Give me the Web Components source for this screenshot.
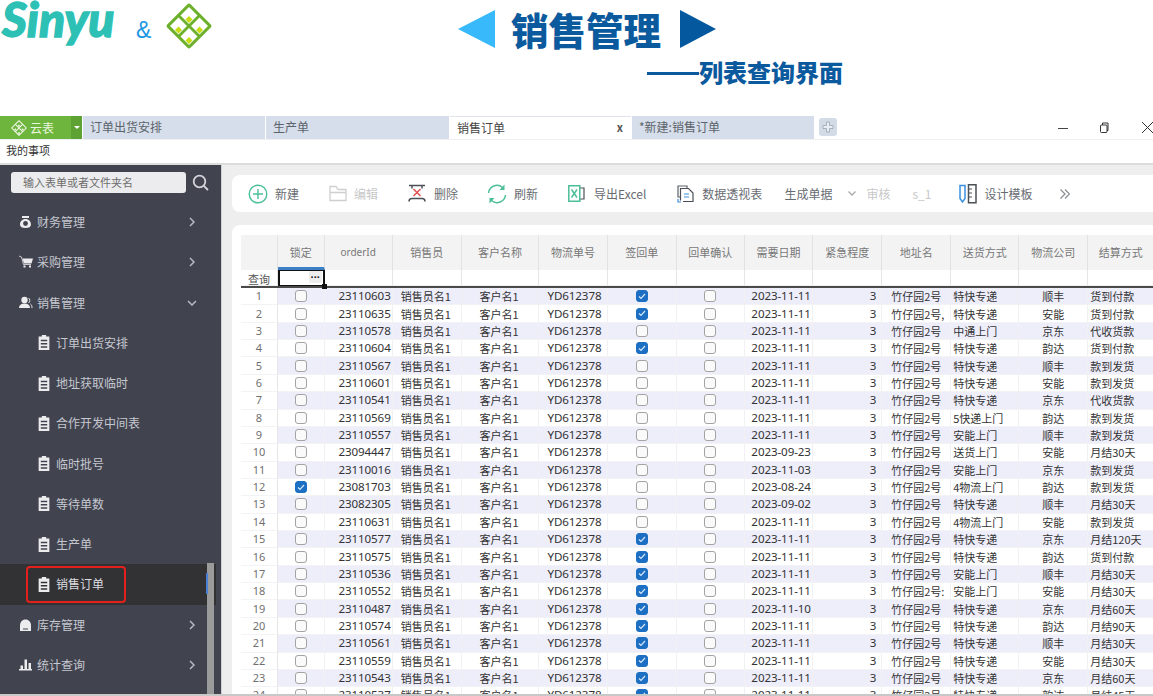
<!DOCTYPE html>
<html lang="zh">
<head>
<meta charset="utf-8">
<title>销售管理</title>
<style>
  html, body { margin: 0; height: 696px; overflow: hidden; background: #fff; }
  body { font-family: "Noto Sans CJK SC", "Noto Sans", sans-serif; }
</style>
</head>
<body>
<slide-header></slide-header>
<app-tabs></app-tabs>
<div style="height:25px;padding-left:6px;font-size:11px;line-height:21px;color:#333;box-sizing:border-box;border-bottom:2px solid #dcdcdc">我的事项</div>
<app-shell>
  <side-menu slot="side"></side-menu>
  <tool-bar slot="main"></tool-bar>
  <data-grid slot="main"></data-grid>
</app-shell>

<script>
const CJK = `"Noto Sans CJK SC", "Noto Sans", sans-serif`;

const diamondMark = (body, mark, dot) => `
  <svg viewBox="0 0 46 46" width="100%" height="100%" aria-hidden="true">
    <rect x="6.500" y="6.500" width="33" height="33" rx="2.500" transform="rotate(45 23 23)" fill="${body}"/>
    ${[[23, 12.5], [12.5, 23], [33.5, 23], [23, 33.5]].map(([x, y]) => `
      <path d="M${x} ${y - 8.5}l8.500 8.500-8.500 8.500-8.500-8.500z" fill="${mark}"/>
      <path d="M${x} ${y + .5}l3.500 3.500-3.500 3.500-3.500-3.500z" fill="${dot}"/>`).join("")}
  </svg>`;

class SlideHeader extends HTMLElement {
  constructor() {
    super();
    this.attachShadow({ mode: "open" }).innerHTML = `
      <style>
        :host { display: block; height: 116px; box-sizing: border-box; overflow: hidden; background: #fff; }
        .top { display: flex; align-items: flex-start; height: 56px; }
        .brand {
          width: 136px; padding-left: 2px; box-sizing: border-box;
          font: italic 900 48px/37px Lato, sans-serif; color: #2dc0b5; white-space: nowrap;
          -webkit-text-stroke: 1.300px #2dc0b5;
        }
        .amp { width: 30px; margin-top: 15px; font: 23px/30px "Liberation Sans", sans-serif; color: #1f97e2; }
        .mark { width: 46px; height: 46px; margin-top: 3px; }
        .title {
          display: flex; align-items: center; gap: 16px; margin: 10px 0 0 246px; height: 38px;
          font: 900 37.5px/38px ${CJK}; color: #0b5a9e; white-space: nowrap;
        }
        .tri { width: 0; height: 0; border-block: 19px solid transparent; }
        .tri.l { border-right: 37px solid #38b9fb; }
        .tri.r { border-left: 36px solid #04589e; margin-left: 3px; }
        .sub { padding: 0 0 0 647px; margin-top: 2px; font: 900 24px/28px ${CJK}; color: #0b5a9e; white-space: nowrap; }
        .sub span { display: inline-block; width: 52px; height: 3px; margin-bottom: 7px; background: #0b5a9e; }
      </style>
      <div class="top">
        <div class="brand">Sinyu</div>
        <div class="amp">&amp;</div>
        <div class="mark">${diamondMark("#6cb02c", "#fff", "#c8dc12")}</div>
        <div class="title"><span class="tri l"></span><span>销售管理</span><span class="tri r"></span></div>
      </div>
      <div class="sub"><span></span>列表查询界面</div>`;
  }
}

class AppTabs extends HTMLElement {
  constructor() {
    super();
    const tabs = [
      ["订单出货安排", 182, false],
      ["生产单", 183, false],
      ["销售订单", 181, true],
      ["*新建:销售订单", 182, false],
    ];
    this.attachShadow({ mode: "open" }).innerHTML = `
      <style>
        :host {
          display: flex; height: 24px; box-sizing: border-box; border-bottom: 1px solid #eef0f3;
          background: #fff; font: 12px/22px ${CJK}; color: #5d636b;
        }
        .home { display: flex; width: 82px; height: 23px; margin-right: 1px; background: #6db53c; color: #eaf5df; }
        .home b { flex: 1; display: flex; align-items: center; gap: 3px; padding-left: 11px; font-weight: 400; }
        .home svg { display: block; }
        .home i { display: flex; align-items: center; justify-content: center; width: 11px; background: #5da233; }
        .home i::after { content: ""; border: 3px solid transparent; border-top-color: #fff; border-bottom: 0; }
        .tab { display: flex; box-sizing: border-box; height: 23px; padding: 0 7px; margin-right: 1px; background: #d5deea; justify-content: space-between; }
        .tab.on { background: #fff; color: #444; border-top: 1px solid #e0e4ea; line-height: 21px; }
        .tab.on span + span { font-size: 11px; margin-right: 1px; color: #555; font-weight: 700; }
        .add { display: flex; align-items: center; justify-content: center; width: 18px; height: 18px; margin: 2px 0 0 4px; border-radius: 3px; background: #d3dbe6; }
        .win { display: flex; margin-left: auto; align-items: center; height: 23px; color: #444; }
        .win svg { display: block; }
      </style>
      <div class="home">
        <b><span style="width:16px;height:16px">${diamondMark("#f3f8ec", "#6db53c", "#f3f8ec")}</span>云表</b>
        <i></i>
      </div>
      ${tabs.map(([t, w, on]) => `<div class="tab${on ? " on" : ""}" style="width:${w}px"><span>${t}</span>${on ? "<span>x</span>" : ""}</div>`).join("")}
      <div class="add"><svg width="12" height="12" viewBox="0 0 12 12"><path d="M4.500 1h3v3.500h3.500v3H7.500v3.500h-3V7.500H1v-3h3.500z" fill="#e9eef4" stroke="#98a3ae" stroke-width=".8"/></svg></div>
      <div class="win">
        <svg width="10" height="10" viewBox="0 0 10 10"><path d="M0 5.500h10" stroke="#444"/></svg>
        <svg style="margin-left:31px" width="11" height="11" viewBox="0 0 11 11" fill="none" stroke="#333"><rect x="1.500" y="3" width="6.500" height="7.500" rx="1"/><path d="M3.500 3V1h5.500v7.500H8"/></svg>
        <svg style="margin-left:32px" width="11" height="11" viewBox="0 0 11 11"><path d="M0 0l11 11M11 0L0 11" stroke="#333"/></svg>
      </div>`;
  }
}

class AppShell extends HTMLElement {
  constructor() {
    super();
    this.attachShadow({ mode: "open" }).innerHTML = `
      <style>
        :host { display: flex; height: 529px; background: #eeeeee; border-bottom: 2px solid #c8c8c8; overflow: hidden; }
        .side { flex: 0 0 221px; }
        .main { flex: 1; min-width: 0; padding: 10px 0 0 10px; display: flex; flex-direction: column; gap: 13px; border-left: 1px solid #cfd0d4; }
      </style>
      <div class="side"><slot name="side"></slot></div>
      <div class="main"><slot name="main"></slot></div>`;
  }
}

const sideIcons = {
  money: `<path d="M3 1h7v2H3zM6.500 4C3 4 1 6.500 1 9.500 1 12 3 13 6.500 13S12 12 12 9.500C12 6.500 10 4 6.500 4z" fill="#ececee"/><circle cx="6.500" cy="8.500" r="2.400" fill="#41434f"/>`,
  cart: `<path d="M0 1l2.500 1L4.500 9.500h7.500" fill="none" stroke="#ececee" stroke-width=".8"/><path d="M3.500 3.500H14L12.500 8.500H5zM4.500 10.500h2v2h-2zM10 10.500h2v2h-2z" fill="#ececee"/>`,
  user: `<circle cx="5.500" cy="4" r="3.200" fill="#ececee"/><path d="M0 12c0-3 2-4.500 5.500-4.500S11 9 11 12z" fill="#ececee"/><path d="M9.500 2a3 3 0 010 5M11.500 8c1 .7 1.500 2 1.500 4" fill="none" stroke="#ececee"/>`,
  doc: `<path d="M3.500 1.500V0h4v1.500H10.500V14H.5V1.500zM2.500 4.500v1.300h6V4.500zM2.500 7.500v1.300h6V7.500zM2.500 10.500v1.300h6v-1.300z" fill="#ececee" fill-rule="evenodd"/>`,
  home: `<path d="M1 7C1.500 3 4 1.500 6.500 1.500S11.500 3 12 7v6H1z" fill="#ececee"/><path d="M4 10.500h5v1H4z" fill="#41434f"/>`,
  chart: `<path d="M0 11h13v1.500H0zM1.500 7.500h2.500V11H1.500zM5.500 1.500H8V11H5.500zM9.500 5H12v6H9.500z" fill="#ececee"/>`,
};

class SideMenu extends HTMLElement {
  constructor() {
    super();
    const items = [
      ["money", "财务管理", 0, ">"],
      ["cart", "采购管理", 0, ">"],
      ["user", "销售管理", 0, "v"],
      ["doc", "订单出货安排", 1],
      ["doc", "地址获取临时", 1],
      ["doc", "合作开发中间表", 1],
      ["doc", "临时批号", 1],
      ["doc", "等待单数", 1],
      ["doc", "生产单", 1],
      ["doc", "销售订单", 1, "", true],
      ["home", "库存管理", 0, ">"],
      ["chart", "统计查询", 0, ">"],
    ];
    const chevron = (c) => c === ">"
      ? `<svg class="chev" style="margin-left:3px" width="6" height="10" viewBox="0 0 6 10" fill="none" stroke="#b9bbc3" stroke-width="1.500"><path d="M1 1l4 4-4 4"/></svg>`
      : `<svg class="chev" style="margin-left:1px" width="10" height="6" viewBox="0 0 10 6" fill="none" stroke="#b9bbc3" stroke-width="1.500"><path d="M1 1l4 4 4-4"/></svg>`;
    this.attachShadow({ mode: "open" }).innerHTML = `
      <style>
        :host { display: block; position: relative; height: 100%; background: #41434f; font: 12px/16px ${CJK}; color: #c6c8cf; overflow: hidden; }
        .search { display: flex; align-items: center; gap: 6px; height: 37px; padding: 7px 0 9px 11px; box-sizing: border-box; }
        .search div { width: 175px; height: 21px; box-sizing: border-box; padding-left: 12px; border-radius: 3px; background: #ececee; font-size: 11px; line-height: 20px; color: #6d6d6d; }
        .row { display: flex; align-items: center; height: 40.25px; padding-left: 19px; box-sizing: border-box; }
        .row svg.ic { flex: none; width: 14px; height: 14px; margin-right: 4px; }
        .row span { flex: 0 0 149px; white-space: nowrap; }
        .row.sub { padding-left: 38px; }
        .row.sub svg.ic { width: 12px; height: 15px; margin-right: 6px; }
        .row.cur { width: 216px; background: #323234; color: #dcdde0; }
        .bar { position: absolute; right: 7px; top: 398px; bottom: 0; width: 7px; background: #9b9b9b; }
        .tick { position: absolute; left: 206px; top: 408px; width: 2px; height: 21px; background: #4a7fd2; }
        .mark { position: absolute; left: 26px; top: 401px; width: 100px; height: 37px; box-sizing: border-box; border: 2px solid #e3201b; border-radius: 4px; }
      </style>
      <div class="search">
        <div>输入表单或者文件夹名</div>
        <svg width="17" height="17" viewBox="0 0 17 17" fill="none" stroke="#d3d5da" stroke-width="1.800"><circle cx="7.500" cy="7.500" r="5.800"/><path d="M11.800 11.800L16 16"/></svg>
      </div>
      ${items.map(([ic, label, sub, ch, cur]) => `
        <div class="row${sub ? " sub" : ""}${cur ? " cur" : ""}">
          <svg class="ic" viewBox="0 0 ${sub ? "11 14" : "14 14"}">${sideIcons[ic]}</svg>
          <span ${sub ? 'style="flex-basis:140px"' : ""}>${label}</span>${ch ? chevron(ch) : ""}
        </div>`).join("")}
      <div class="bar"></div>
      <div class="tick"></div>
      <div class="mark"></div>`;
  }
}

const toolIcons = {
  add: `<svg width="20" height="20" viewBox="0 0 20 20" fill="none" stroke="#4cbf97" stroke-width="1.400"><circle cx="10" cy="10" r="8.800"/><path d="M10 5v10M5 10h10"/></svg>`,
  folder: `<svg width="18" height="17" viewBox="0 0 18 17" fill="none" stroke="#cfcfcf" stroke-width="1.300"><path d="M1 15.500V1.500h6l2 3h8v11zM1 7.500h16"/></svg>`,
  del: `<svg width="18" height="19" viewBox="0 0 18 19" fill="none"><path d="M1 1.500h16M4 1.500v3M14 1.500v3M1 17.500c0-2 1-3 3-3h10c2 0 3 1 3 3" stroke="#4b5057" stroke-width="1.500"/><path d="M5.500 5l7 7M12.500 5l-7 7" stroke="#e34f4f" stroke-width="1.500"/></svg>`,
  refresh: `<svg width="20" height="20" viewBox="0 0 20 20" fill="none" stroke="#4cbf97" stroke-width="1.500"><path d="M1.500 9A8.500 8.500 0 0115.500 3.500M18.500 11A8.500 8.500 0 014.500 16.500"/><path d="M17.500 .5v5.500H12.500zM2.500 19.500V14H7.500z" fill="#4cbf97" stroke="none"/></svg>`,
  excel: `<svg width="17" height="17" viewBox="0 0 17 17" fill="none"><path d="M11.500 3H16V14H11.500" stroke="#4b5057" stroke-width="1.200"/><path d="M.8.8h11v15.400H.8z" stroke="#4cbf97" stroke-width="1.500"/><path d="M3.500 4.500l5.500 8M9 4.500l-5.500 8" stroke="#4cbf97" stroke-width="1.500"/></svg>`,
  pivot: `<svg width="18" height="18" viewBox="0 0 18 18" fill="none"><path d="M3 12H1V1h9v2" stroke="#5c6168" stroke-width="1.200"/><path d="M3.500 15.500V3.500h8l4.500 4.500v8.500H6" stroke="#4b5057" stroke-width="1.200"/><path d="M7 9h5M7 12h5" stroke="#3a8fe0" stroke-width="1.200"/><path d="M1 14v3h3" stroke="#3a8fe0" stroke-width="1.200"/></svg>`,
  design: `<svg width="18" height="20" viewBox="0 0 18 20" fill="none"><path d="M1 1.500h5v13L3.500 18 1 14.500z" stroke="#3a8fe0" stroke-width="1.500"/><path d="M9.500.8h7.500v18H9.500z" stroke="#4b5057" stroke-width="1.500"/><path d="M9.500 5h3.500M9.500 9h3.500M9.500 13h3.500" stroke="#4b5057" stroke-width="1.200"/></svg>`,
};

class ToolBtn extends HTMLElement {
  static observedAttributes = ["icon"];
  constructor() {
    super();
    this.attachShadow({ mode: "open" }).innerHTML = `
      <style>
        :host { display: inline-flex; align-items: center; gap: var(--i, 7px); font: 12px/16px ${CJK}; color: #686c72; white-space: nowrap; }
        :host([off]) { color: #c8c8c8; }
        #icon { display: flex; }
        #icon:empty { display: none; }
      </style>
      <span id="icon"></span><slot></slot>`;
  }
  attributeChangedCallback(name, old, value) {
    this.shadowRoot.getElementById("icon").innerHTML = toolIcons[value] || "";
  }
}

class ToolBar extends HTMLElement {
  constructor() {
    super();
    this.attachShadow({ mode: "open" }).innerHTML = `
      <style>
        :host { display: flex; align-items: center; flex: none; height: 37px; padding-left: 16px; background: #fff; border-radius: 8px 0 0 8px; }
        tool-btn { margin-left: var(--g, 30px); }
        tool-btn:first-of-type { margin-left: 0; }
      </style>
      <tool-btn icon="add">新建</tool-btn>
      <tool-btn icon="folder" off>编辑</tool-btn>
      <tool-btn icon="del" style="--i:8px">删除</tool-btn>
      <tool-btn icon="refresh" style="--g:29px">刷新</tool-btn>
      <tool-btn icon="excel" style="--i:9px">导出Excel</tool-btn>
      <tool-btn icon="pivot" style="--g:31px">数据透视表</tool-btn>
      <tool-btn style="--g:22px">生成单据</tool-btn>
      <svg style="margin-left:16px" width="8" height="5" viewBox="0 0 8 5" fill="none" stroke="#a8a8a8" stroke-width="1.300"><path d="M.5.5L4 4 7.500.5"/></svg>
      <tool-btn off style="--g:10px">审核</tool-btn>
      <tool-btn off style="--g:22px">s_1</tool-btn>
      <tool-btn icon="design" style="--g:28px">设计模板</tool-btn>
      <svg style="margin-left:28px" width="10" height="10" viewBox="0 0 10 10" fill="none" stroke="#8a8d92" stroke-width="1.200"><path d="M.5.5L5 5 .5 9.500M5 .5L9.500 5 5 9.500"/></svg>`;
  }
}

// no, lock, sign, date, addr, ship, carrier, pay
const ROWS = [
  ["23110603", 0, 1, "2023-11-11", "竹仔园2号", "特快专递", "顺丰", "货到付款"],
  ["23110635", 0, 1, "2023-11-11", "竹仔园2号,", "特快专递", "安能", "货到付款"],
  ["23110578", 0, 0, "2023-11-11", "竹仔园2号", "中通上门", "京东", "代收货款"],
  ["23110604", 0, 1, "2023-11-11", "竹仔园2号", "特快专递", "韵达", "货到付款"],
  ["23110567", 0, 0, "2023-11-11", "竹仔园2号", "特快专递", "顺丰", "款到发货"],
  ["23110601", 0, 0, "2023-11-11", "竹仔园2号", "特快专递", "安能", "款到发货"],
  ["23110541", 0, 0, "2023-11-11", "竹仔园2号", "特快专递", "京东", "代收货款"],
  ["23110569", 0, 0, "2023-11-11", "竹仔园2号", "5快递上门", "韵达", "款到发货"],
  ["23110557", 0, 0, "2023-11-11", "竹仔园2号", "安能上门", "顺丰", "款到发货"],
  ["23094447", 0, 0, "2023-09-23", "竹仔园2号", "送货上门", "安能", "月结30天"],
  ["23110016", 0, 0, "2023-11-03", "竹仔园2号", "安能上门", "京东", "款到发货"],
  ["23081703", 1, 0, "2023-08-24", "竹仔园2号", "4物流上门", "韵达", "款到发货"],
  ["23082305", 0, 0, "2023-09-02", "竹仔园2号", "特快专递", "顺丰", "月结30天"],
  ["23110631", 0, 0, "2023-11-11", "竹仔园2号", "4物流上门", "安能", "款到发货"],
  ["23110577", 0, 1, "2023-11-11", "竹仔园2号", "特快专递", "京东", "月结120天"],
  ["23110575", 0, 1, "2023-11-11", "竹仔园2号", "特快专递", "韵达", "货到付款"],
  ["23110536", 0, 1, "2023-11-11", "竹仔园2号", "安能上门", "顺丰", "月结30天"],
  ["23110552", 0, 1, "2023-11-11", "竹仔园2号:", "安能上门", "安能", "月结30天"],
  ["23110487", 0, 1, "2023-11-10", "竹仔园2号", "特快专递", "京东", "月结60天"],
  ["23110574", 0, 1, "2023-11-11", "竹仔园2号", "特快专递", "韵达", "月结90天"],
  ["23110561", 0, 1, "2023-11-11", "竹仔园2号", "特快专递", "顺丰", "月结30天"],
  ["23110559", 0, 1, "2023-11-11", "竹仔园2号", "特快专递", "安能", "月结30天"],
  ["23110543", 0, 1, "2023-11-11", "竹仔园2号", "特快专递", "京东", "月结60天"],
  ["23110537", 0, 1, "2023-11-11", "竹仔园2号", "特快专递", "韵达", "月结45天"],
];

const HEADS = ["", "锁定", "orderId", "销售员", "客户名称", "物流单号", "签回单", "回单确认", "需要日期", "紧急程度", "地址名", "送货方式", "物流公司", "结算方式"];

class DataGrid extends HTMLElement {
  constructor() {
    super();
    const box = (on) => `<i class="cb${on ? " on" : ""}">${on ? `<svg width="8" height="7" viewBox="0 0 8 7" fill="none" stroke="#d5e7fa" stroke-width="1.200"><path d="M1 3.500l2 2L7 1"/></svg>` : ""}</i>`;
    const row = (r, i) => `
      <div class="c no">${i + 1}</div>
      <div class="c mid z">${box(r[1])}</div>
      <div class="c right num z">${r[0]}</div>
      <div class="c pl8 z">销售员名1</div>
      <div class="c mid pr2 z">客户名1</div>
      <div class="c mid num pl3 z">YD612378</div>
      <div class="c mid z">${box(r[2])}</div>
      <div class="c mid z">${box(0)}</div>
      <div class="c mid num pl5 z">${r[3]}</div>
      <div class="c right num pr5 z">3</div>
      <div class="c pl9 z">${r[4]}</div>
      <div class="c pl2 z">${r[5]}</div>
      <div class="c mid z">${r[6]}</div>
      <div class="c pl2 z">${r[7]}</div>`.replaceAll(' z"', i % 2 ? '"' : ' z"');
    this.attachShadow({ mode: "open" }).innerHTML = `
      <style>
        :host { display: block; flex: 1; min-height: 0; padding: 10px 0 0 9px; background: #fff; border-radius: 8px 0 0 0; overflow: hidden; font: 11px/16px ${CJK}; color: #333; }
        .g {
          display: grid;
          grid-template-columns: 37px 46.700px 68px 69px 77.600px 68.400px 69px 68.300px 68.300px 69px 69px 68px 69px 66px;
          grid-template-rows: 34.500px 16.500px 2px;
          grid-auto-rows: 17.360px;
        }
        .h { display: flex; align-items: center; justify-content: center; box-sizing: border-box; background: #f3f3f3; color: #777; border-right: 1px solid #e2e2e2; white-space: nowrap; }
        .h.en { font: 10px/16px "Noto Sans", sans-serif; }
        .h.sel { border-bottom: 3px solid #3b80c6; padding-top: 3px; }
        .f { background: #fff; border-right: 1px solid #e6e6e6; border-bottom: 1px solid #f0f0f0; }
        .f.q { padding-left: 7px; color: #555; font-size: 11px; line-height: 19px; }
        .f.act { position: relative; z-index: 1; box-sizing: border-box; border: 2px solid #111; border-top-width: 1px; border-bottom-width: 1px; }
        .f.act::after { content: ""; position: absolute; right: -4px; bottom: -4px; width: 5px; height: 5px; background: #111; }
        .dots { position: absolute; right: 1px; top: 0; width: 13px; height: 12px; background: #ededed; border-radius: 2px; font: 700 11px/7px "Liberation Sans", sans-serif; text-align: center; color: #222; }
        .line { grid-column: 1 / -1; background: #4a4a4a; }
        .c { display: flex; align-items: center; min-width: 0; white-space: nowrap; overflow: visible; box-sizing: border-box; border-right: 1px solid #f1f1f4; border-bottom: 1px solid #f3f3f6; }
        .z { background: #eeeefb; }
        .no { justify-content: center; color: #707070; font: 11px/16px "Noto Sans", sans-serif; border-right-color: #e6e6e6; }
        .mid { justify-content: center; }
        .right { justify-content: flex-end; padding-right: 1px; }
        .num { font: 11.600px/16px "Noto Sans", sans-serif; letter-spacing: -.1px; }
        .pr5 { padding-right: 5px; }
        .pr2 { padding-right: 2px; }
        .pl8 { padding-left: 8px; }
        .pl9 { padding-left: 9px; }
        .pl2 { padding-left: 2px; }
        .pl3 { padding-left: 3px; }
        .pl5 { padding-left: 5px; }
        .cb { display: flex; align-items: center; justify-content: center; width: 12px; height: 12px; box-sizing: border-box; border: 1.300px solid #a3a3a3; border-radius: 3px; background: #fafafa; }
        .cb.on { background: #1c6fc2; border-color: #1c6fc2; }
      </style>
      <div class="g">
        ${HEADS.map((t, i) => `<div class="h${t === "orderId" ? " en" : ""}${i === 1 ? " sel" : ""}">${t}</div>`).join("")}
        <div class="f q">查询</div>
        <div class="f act"><span class="dots">...</span></div>
        ${"<div class=\"f\"></div>".repeat(12)}
        <div class="line"></div>
        ${ROWS.map(row).join("")}
      </div>`;
  }
}

customElements.define("slide-header", SlideHeader);
customElements.define("app-tabs", AppTabs);
customElements.define("app-shell", AppShell);
customElements.define("side-menu", SideMenu);
customElements.define("tool-btn", ToolBtn);
customElements.define("tool-bar", ToolBar);
customElements.define("data-grid", DataGrid);
</script>
</body>
</html>
